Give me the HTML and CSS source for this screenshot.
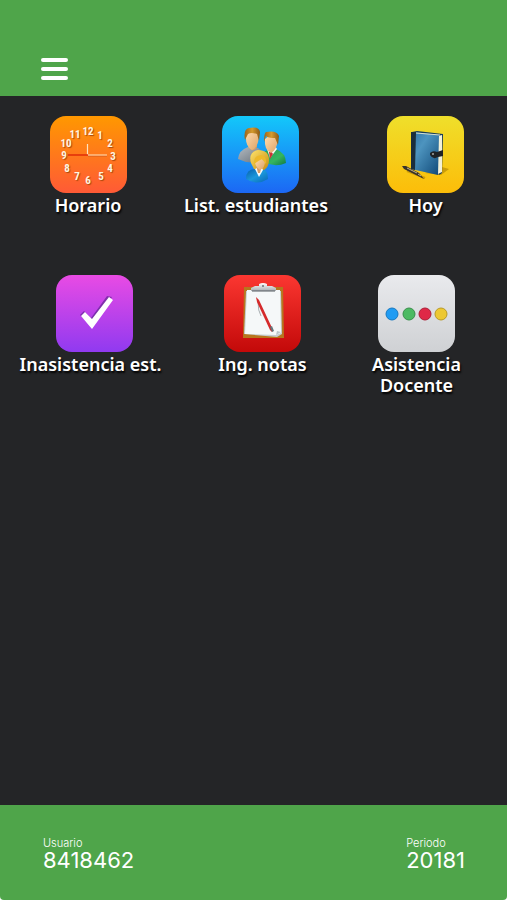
FILE: index.html
```html
<!DOCTYPE html>
<html lang="es">
<head>
<meta charset="utf-8">
<meta name="viewport" content="width=device-width, initial-scale=1">
<title>Menú docente</title>
<link rel="stylesheet" href="styles.css">
</head>
<body>
<div class="app">
  <header class="topbar">
    <button class="menu" type="button" aria-label="Abrir menú">
      <span class="menu-bar"></span>
      <span class="menu-bar"></span>
      <span class="menu-bar"></span>
    </button>
  </header>

  <main class="board">
    <nav class="row row-first">
      <a class="tile" href="#horario">
        <svg class="icon" viewBox="0 0 77 77" aria-hidden="true">
          <defs>
            <linearGradient id="orange" x1="0" y1="0" x2="0" y2="1"><stop offset="0" stop-color="#ff9800"/><stop offset="1" stop-color="#ff5a36"/></linearGradient>
          </defs>
          <rect width="77" height="77" rx="16" fill="url(#orange)"/>
          <g class="numerals">
            <text x="38" y="19">12</text><text x="50" y="23">1</text><text x="60" y="31">2</text>
            <text x="63" y="44">3</text><text x="60" y="56">4</text><text x="51" y="64">5</text>
            <text x="38" y="68">6</text><text x="27" y="64">7</text><text x="17" y="56">8</text>
            <text x="14" y="43">9</text><text x="16" y="31">10</text><text x="25" y="22">11</text>
          </g>
          <path d="M38 40H57" stroke="#b94a20" stroke-width="1" opacity=".6"/>
          <path d="M37.500 28V39M38 39H57" stroke="#ffe3bd" stroke-width="1.200"/>
          <path d="M18 39H38" stroke="#e02c08" stroke-width="1.500"/>
        </svg>
        <span class="label">Horario</span>
      </a>

      <a class="tile tile-long" href="#estudiantes">
        <svg class="icon" viewBox="0 0 77 77" aria-hidden="true">
          <defs>
            <linearGradient id="blue" x1="0" y1="0" x2="0" y2="1"><stop offset="0" stop-color="#13c8fa"/><stop offset="1" stop-color="#1c67f4"/></linearGradient>
            <linearGradient id="skin" x1="0" y1="0" x2="1" y2="1"><stop offset="0" stop-color="#ffdcae"/><stop offset="1" stop-color="#dda266"/></linearGradient>
            <linearGradient id="hair" x1="0" y1="0" x2="1" y2="0"><stop offset="0" stop-color="#9c651c"/><stop offset=".5" stop-color="#d49a2d"/><stop offset="1" stop-color="#8c5816"/></linearGradient>
            <linearGradient id="blond" x1="0" y1="0" x2="1" y2="1"><stop offset="0" stop-color="#ffe46a"/><stop offset="1" stop-color="#c58a13"/></linearGradient>
            <linearGradient id="grey" x1="0" y1="0" x2="1" y2="1"><stop offset="0" stop-color="#b3bac0"/><stop offset="1" stop-color="#68727c"/></linearGradient>
            <linearGradient id="green" x1="0" y1="0" x2="1" y2="1"><stop offset="0" stop-color="#1d9c57"/><stop offset=".6" stop-color="#35b55e"/><stop offset="1" stop-color="#117843"/></linearGradient>
            <linearGradient id="teal" x1="0" y1="0" x2="1" y2="1"><stop offset="0" stop-color="#075eaa"/><stop offset=".5" stop-color="#1b98dc"/><stop offset="1" stop-color="#0867b6"/></linearGradient>
          </defs>
          <rect width="77" height="77" rx="16" fill="url(#blue)"/>
          <path d="M16 43Q17 34 26 31L36 32Q41 35 40 45Q28 49 16 43Z" fill="url(#grey)"/>
          <path d="M26 30Q30 38 35 31V27H27Z" fill="#d9a065"/>
          <path d="M24 18Q23 31 30 34Q37 31 37 18Q30 12 24 18Z" fill="url(#skin)"/>
          <path d="M23 24Q21 13 27 12Q37 10 38 16L37 25L35 18Q29 16 26 18Z" fill="url(#hair)"/>
          <path d="M41 40Q41 35 46 34L54 33Q64 37 64 47Q53 52 42 46Z" fill="url(#green)"/>
          <path d="M45 33L48 42L55 33L53 30H46Z" fill="#f5f7f4"/>
          <path d="M47 36L49 35L51 38L48 43Z" fill="#c93437"/>
          <path d="M43 23Q42 34 49 37Q55 34 56 23Q49 16 43 23Z" fill="url(#skin)"/>
          <path d="M42 26Q42 17 44 16Q55 14 57 20L56 29L53 22Q46 22 44 20Z" fill="url(#hair)"/>
          <path d="M24 63Q24 53 33 53H41Q46 55 46 63Q35 70 24 63Z" fill="url(#teal)"/>
          <path d="M29 47Q26 36 36 34Q47 34 47 44Q47 51 42 54L32 53Z" fill="url(#blond)"/>
          <path d="M33 53L37 61L41 54L39 50Z" fill="#f4fbff"/>
          <path d="M34 49H40L38 57H36Z" fill="#d99b62"/>
          <path d="M33 45L38 42L43 45Q43 52 38 54Q33 51 33 45Z" fill="url(#skin)"/>
          <path d="M32 48Q31 40 39 39Q45 40 44 48L40 43Q36 45 32 48Z" fill="#edb92a"/>
        </svg>
        <span class="label">List. estudiantes</span>
      </a>

      <a class="tile" href="#hoy">
        <svg class="icon" viewBox="0 0 77 77" aria-hidden="true">
          <defs>
            <linearGradient id="yellow" x1="0" y1="0" x2="0" y2="1"><stop offset="0" stop-color="#efdf2b"/><stop offset="1" stop-color="#fcbd09"/></linearGradient>
            <linearGradient id="cover" x1="0" y1="0" x2="1" y2="1"><stop offset="0" stop-color="#2f73a6"/><stop offset=".35" stop-color="#4d94bf"/><stop offset="1" stop-color="#104a79"/></linearGradient>
          </defs>
          <rect width="77" height="77" rx="16" fill="url(#yellow)"/>
          <path d="M55 51L62 53L54 59L38 57Z" fill="#9c7100" opacity=".5"/>
          <path d="M25 16L30 15L56 18L55 57L52 59Z" fill="#183e5a"/>
          <path d="M51 20L55 19V56L51 58Z" fill="#f3f0d7"/>
          <path d="M27 16L52 19L51 59L24 53Z" fill="url(#cover)"/>
          <path d="M24 16L29 16L28 54L24 53Z" fill="#1b2e3c"/>
          <path d="M29 17L53 19" stroke="#d7e0cf" stroke-width="1"/>
          <path d="M43 37Q46 34 50 36L56 34V40L51 41Q46 44 43 39Z" fill="#202326"/>
          <circle cx="46" cy="38" r="1" fill="#a5a9a4"/>
          <path d="M20 55L38 62" stroke="#a37500" stroke-width="2" opacity=".5"/>
          <path d="M15 50L19 50L32 57L37 63L29 59L17 53Z" fill="#38332b"/>
          <path d="M20 52L30 57M31 58L34 60" stroke="#c8b786" stroke-width="1"/>
        </svg>
        <span class="label">Hoy</span>
      </a>
    </nav>

    <nav class="row row-second">
      <a class="tile tile-long" href="#inasistencia">
        <svg class="icon" viewBox="0 0 77 77" aria-hidden="true">
          <defs>
            <linearGradient id="purple" x1="0" y1="0" x2="0" y2="1"><stop offset="0" stop-color="#e94be4"/><stop offset="1" stop-color="#903af0"/></linearGradient>
          </defs>
          <rect width="77" height="77" rx="16" fill="url(#purple)"/>
          <path d="M24 40L28 36L35 43L51 21L56 22L36 52Z" fill="#59258c" opacity=".65"/>
          <path d="M25 41L29 37L36 44L53 22L57 25L36 54Z" fill="#fff"/>
        </svg>
        <span class="label">Inasistencia est.</span>
      </a>

      <a class="tile" href="#notas">
        <svg class="icon" viewBox="0 0 77 77" aria-hidden="true">
          <defs>
            <linearGradient id="red" x1="0" y1="0" x2="0" y2="1"><stop offset="0" stop-color="#fb3731"/><stop offset="1" stop-color="#c30909"/></linearGradient>
            <linearGradient id="metal" x1="0" y1="0" x2="0" y2="1"><stop offset="0" stop-color="#fff"/><stop offset="1" stop-color="#a8adb2"/></linearGradient>
          </defs>
          <rect width="77" height="77" rx="16" fill="url(#red)"/>
          <path d="M20 12H59L60 63H19Z" fill="#b7761e"/>
          <path d="M22 16H57L58 59L53 62L20 59Z" fill="#c4cdd1"/>
          <path d="M23 15H56L57 58L52 60L21 59Z" fill="#f5f8f9"/>
          <path d="M52 60L57 57L53 56Z" fill="#bac4c9"/>
          <path d="M27 16V13L31 11H35V9Q39 7 43 9V11H48L52 13V16Z" fill="url(#metal)"/>
          <path d="M28 16H51" stroke="#555b60" stroke-width="1"/>
          <circle cx="39" cy="11" r="1" fill="#6b7175"/>
          <path d="M34 27Q34 36 37 41" fill="none" stroke="#a7adb1" stroke-width="1"/>
          <path d="M32 22L35 25L49 55L48 57L46 55L33 27Z" fill="#d52a2b"/>
          <path d="M46 52L48 51L50 56L48 57Z" fill="#65747b"/>
        </svg>
        <span class="label">Ing. notas</span>
      </a>

      <a class="tile" href="#asistencia">
        <svg class="icon" viewBox="0 0 77 77" aria-hidden="true">
          <defs>
            <linearGradient id="silver" x1="0" y1="0" x2="0" y2="1"><stop offset="0" stop-color="#e9eaed"/><stop offset="1" stop-color="#cfd1d4"/></linearGradient>
          </defs>
          <rect width="77" height="77" rx="16" fill="url(#silver)"/>
          <g stroke-width="1">
            <circle cx="14" cy="39" r="6" fill="#209cf3" stroke="#1678c0"/>
            <circle cx="31" cy="39" r="6" fill="#4cba62" stroke="#398e4b"/>
            <circle cx="47" cy="39" r="6" fill="#df2847" stroke="#ad1e37"/>
            <circle cx="63" cy="39" r="6" fill="#edc832" stroke="#b99a25"/>
          </g>
        </svg>
        <span class="label">Asistencia<br>Docente</span>
      </a>
    </nav>
  </main>

  <footer class="status">
    <dl class="field"><dt>Usuario</dt><dd>8418462</dd></dl>
    <dl class="field"><dt>Periodo</dt><dd>20181</dd></dl>
  </footer>
</div>
</body>
</html>
```
FILE: styles.css
```css
* {
  box-sizing: border-box;
}

body {
  margin: 0;
  background: #fff;
  color: #fff;
  font-family: "Noto Sans", sans-serif;
}

.app {
  display: flex;
  flex-direction: column;
  min-height: 100vh;
}

.topbar {
  padding: 58px 41px 16px;
  background: #4fa54a;
}

.menu {
  display: flex;
  flex-direction: column;
  gap: 4px;
  width: 27px;
  padding: 0;
  border: 0;
  background: none;
  cursor: pointer;
}

.menu-bar {
  height: 5px;
  border: solid #4fa54a;
  border-width: 0;
  border-radius: 2px;
  background: #fff;
}

.topbar .menu {
  height: 22px;
  justify-content: space-between;
  gap: 0;
}

.topbar .menu-bar {
  height: 4px;
}

.board {
  flex: 1;
  display: flex;
  flex-direction: column;
  gap: 59px;
  padding: 20px 0;
  background: #242527;
}

.row {
  display: grid;
  align-items: start;
}

.row-first {
  grid-template-columns: 176fr 168fr 163fr;
}

.row-second {
  grid-template-columns: 189fr 147fr 161fr;
  padding-right: 10px;
}

.tile {
  display: flex;
  flex-direction: column;
  align-items: center;
  color: #fff;
  text-decoration: none;
}

.icon {
  width: 77px;
  height: 77px;
}

.label {
  padding-top: 2px;
  font-size: 18px;
  font-weight: 600;
  line-height: 21px;
  text-align: center;
  white-space: nowrap;
  text-shadow: 1px 2px 2px #000;
}

.tile-long .label {
  padding-right: 8px;
}

.numerals {
  fill: #fff4e0;
  font-family: "Liberation Sans Narrow", "Roboto Condensed", Roboto, sans-serif;
  font-size: 11px;
  font-weight: 700;
  text-anchor: middle;
  text-shadow: 1px 1px 1px #a8480c;
}

.status {
  display: flex;
  justify-content: space-between;
  padding: 32px 42px 29px 43px;
  border-radius: 0 0 4px 4px;
  background: #4fa54a;
  font-family: Inter, sans-serif;
}

.field {
  margin: 0;
}

.field dt {
  font-size: 11px;
  font-weight: 300;
  line-height: 12px;
}

.field dd {
  margin: 0;
  font-size: 22px;
  font-weight: 400;
  line-height: 22px;
}
```
